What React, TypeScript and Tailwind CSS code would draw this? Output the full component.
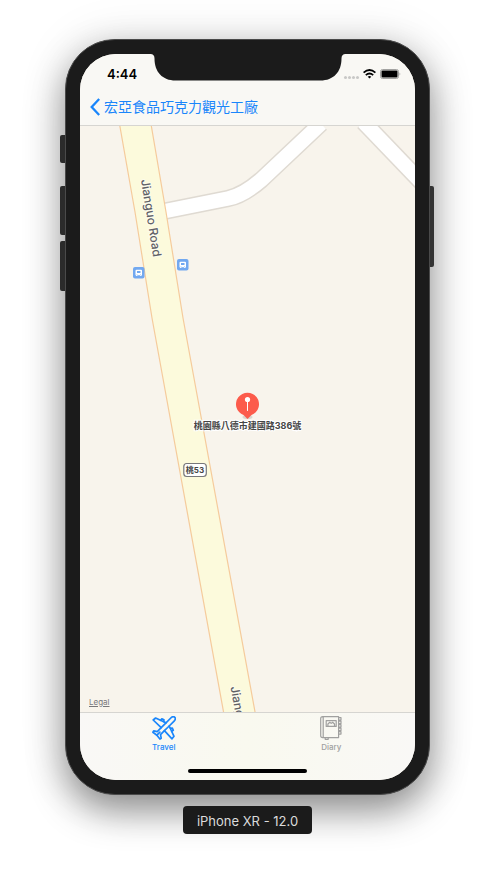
import React from "react";

const latinCjk = "font-[Inter,'Noto_Sans_CJK_TC',sans-serif]";

function BusStop({ x, y }: { x: number; y: number }) {
  return (
    <g transform={`translate(${x} ${y})`}>
      <rect width="11.5" height="11.5" rx="2" fill="#72a8f0" />
      <path
        fillRule="evenodd"
        fill="#fff"
        d="M3.500 2.800h4.500q1 0 1 1v4.400h-.6v.9H7.200v-.9H4.300v.9H3.100v-.9h-.6V3.800q0-1 1-1ZM4 4v2h3.500V4ZM3.600 7v.6h.8V7ZM7.100 7v.6h.8V7Z"
      />
    </g>
  );
}

function MapDrawing() {
  return (
    <svg
      viewBox="80 126 335 586"
      preserveAspectRatio="xMidYMin slice"
      className={`block size-full ${latinCjk}`}
      role="img"
      aria-label="Map"
    >
      <g fill="none">
        <path d="M158 212.500 L228 198.500 Q243 195.500 261 180 L321 123.500" stroke="#dfdad2" strokeWidth="17.500" />
        <path d="M363.500 122 L425 186" stroke="#dfdad2" strokeWidth="17.500" />
        <path d="M158 212.500 L228 198.500 Q243 195.500 261 180 L321 123.500" stroke="#fff" strokeWidth="14.500" />
        <path d="M363.500 122 L425 186" stroke="#fff" strokeWidth="14.500" />
      </g>
      <path
        d="M119.500 124 L135 212 L152 318 L225 720 L256.500 720 L183 318 L166 212 L151 124 Z"
        fill="#fcfadc"
        stroke="#f5cb9c"
        strokeWidth="1.200"
      />
      <g fill="#606066" stroke="#fdfcec" strokeWidth="2" paintOrder="stroke" fontSize="12" fontWeight="500">
        <text transform="translate(141 180) rotate(81)">Jianguo Road</text>
        <text transform="translate(230.500 687) rotate(80)">Jiang</text>
      </g>
      <BusStop x={133} y={267} />
      <BusStop x={177} y={259} />
      <ellipse cx="247.500" cy="417" rx="5" ry="2" fill="#000" opacity=".12" />
      <path
        d="M247.500 419 L243.500 415 A11.500 11.500 0 1 1 251.500 415 Z"
        fill="#fc5b4b"
      />
      <path d="M247.500 400V410.500" stroke="#fff" strokeWidth="1" strokeLinecap="round" />
      <circle cx="247.500" cy="399.500" r="2.600" fill="#fff" />
      <text
        x="247.500"
        y="429"
        textAnchor="middle"
        fontSize="9"
        fontWeight="700"
        fill="#454545"
        stroke="#fff"
        strokeWidth="2"
        paintOrder="stroke"
      >
        桃園縣八德市建國路386號
      </text>
      <rect x="183.800" y="463.500" width="22.500" height="13" rx="3" fill="#fff" stroke="#77777a" strokeWidth="1.200" />
      <text x="195" y="473" textAnchor="middle" fontSize="8" fontWeight="700" fill="#444">
        桃53
      </text>
    </svg>
  );
}

function PlaneIcon() {
  return (
    <svg
      viewBox="0 0 24 24"
      className="size-6"
      fill="none"
      stroke="currentColor"
      strokeWidth="1.700"
      strokeLinejoin="round"
      strokeLinecap="round"
      aria-hidden="true"
    >
      <path d="M22.800 1.300C21.700.3 20 .8 18.800 2L14 6.800 3.600 2 1.200 4l8 7.600-3.900 4L1.700 14.800.9 16.200l4 3 3 3.900 1.300-.9-.7-3.600 3.900-4 7.600 8.200 2-2.500L17.200 10l4.900-4.900C23.300 4 23.800 2.300 22.800 1.300Z" />
      <path d="M14 6.800 9.200 11.600M17.200 10 12.400 14.600M4.900 19.200l3-3" />
      <path d="M8.600 4.300 9.800 2.800 12 3.800 11.600 5.600M18.400 12.400 20.300 12 21.300 14.300 19.700 15.400" />
    </svg>
  );
}

function DiaryIcon() {
  return (
    <svg
      viewBox="0 0 24 24"
      className="size-6"
      fill="none"
      stroke="currentColor"
      strokeWidth="1.200"
      strokeLinejoin="round"
      aria-hidden="true"
    >
      <path d="M3.600.7H19.600V21.600H3.600Q1.700 21.600 1.700 19.700V2.600Q1.700.7 3.600.7ZM4.200.7V21.600" />
      <path d="M7.200 4.600H17.200V10.400H7.200ZM8.900 10.200V8L10.800 6.300 12.200 7.400 13.600 6.300 15.500 8V10.200" />
      <path d="M19.600 1.700h2.400v2.400h-2.400M19.600 5.200h2.400v2.400h-2.400M19.600 8.700h2.400v2.400h-2.400M19.600 12.200h2.400v2.400h-2.400M19.600 15.700h2.400v2.400h-2.400" />
      <path d="M6.200 21.600v1.700h3v-1.700" />
    </svg>
  );
}

function StatusBar() {
  return (
    <div className="flex h-[42px] items-center justify-between pr-[14px] pl-[27px]">
      <time className="text-[13px] font-semibold text-black">4:44</time>
      <div className="flex items-center gap-1 pb-[2px]">
        <span className="mt-[6px] flex gap-px" aria-hidden="true">
          <i className="size-[3px] rounded-full bg-[#c8c8c6]" />
          <i className="size-[3px] rounded-full bg-[#c8c8c6]" />
          <i className="size-[3px] rounded-full bg-[#c8c8c6]" />
          <i className="size-[3px] rounded-full bg-[#c8c8c6]" />
        </span>
        <svg viewBox="0 0 13 10" className="h-[10px] w-[13px]" fill="none" stroke="#000" strokeWidth="1.700" aria-label="Wi-Fi">
          <path d="M.6 3.700Q6.500-1.700 12.400 3.700M2.800 6.200Q6.500 2.800 10.200 6.200" />
          <path d="M6.500 9.600 4.700 7.700Q6.500 6.300 8.300 7.700Z" fill="#000" stroke="none" />
        </svg>
        <svg viewBox="0 0 21 10" className="h-[10px] w-[21px]" aria-label="Battery">
          <rect x=".5" y=".5" width="18" height="9" rx="2" fill="none" stroke="#a3a3a1" />
          <rect x="1.500" y="1.500" width="16" height="7" rx="1" fill="#000" />
          <path d="M19.600 3.300Q21 5 19.600 6.700Z" fill="#8c8c8a" />
        </svg>
      </div>
    </div>
  );
}

function Notch() {
  return (
    <svg viewBox="0 0 195 27" className="absolute top-0 left-1/2 h-[27px] w-[195px] -translate-x-1/2" aria-hidden="true">
      <path d="M0 0Q4 0 4 4.500C4 18 12 26.500 25 26.500H170C183 26.500 191 18 191 4.500Q191 0 195 0Z" fill="#1b1b1b" />
    </svg>
  );
}

export default function App() {
  return (
    <main className={`flex min-h-screen flex-col items-center bg-white px-[65px] pt-[39px] pb-9 ${latinCjk}`}>
      <div className="relative w-full max-w-[414px] rounded-[50px] border border-[#4a4a4a] bg-[#1b1b1b] p-[14px] shadow-[0_16px_36px_rgba(0,0,0,0.42),0_0_50px_rgba(0,0,0,0.1)]">
        <span className="absolute top-[95px] -left-[6px] h-7 w-[5px] rounded-l-[2px] bg-[#2b2b2b]" />
        <span className="absolute top-[146px] -left-[6px] h-[49px] w-[5px] rounded-l-[2px] bg-[#2b2b2b]" />
        <span className="absolute top-[201px] -left-[6px] h-[50px] w-[5px] rounded-l-[2px] bg-[#2b2b2b]" />
        <span className="absolute top-[146px] -right-[5px] h-[81px] w-[4px] rounded-r-[2px] bg-[#333]" />

        <div className="relative overflow-hidden rounded-[36px] bg-[#f8f4ec]">
          <header className="border-b border-[#d6d5d1] bg-[#f9f8f4]">
            <StatusBar />
            <nav className="flex h-[29px] items-center px-[10px] pb-2">
              <button type="button" className="flex items-center gap-1 text-[14px] leading-5 text-[#1a86fb]">
                <svg viewBox="0 0 10 18" className="h-[18px] w-[10px]" fill="none" stroke="currentColor" strokeWidth="2.300" aria-hidden="true">
                  <path d="M9.200 1 1.700 9l7.500 8" />
                </svg>
                宏亞食品巧克力觀光工廠
              </button>
            </nav>
          </header>

          <section className="relative h-[586px]">
            <MapDrawing />
            <a href="#legal" className="absolute bottom-[5px] left-[9px] text-[8px] leading-[10px] text-[#77777a] underline">
              Legal
            </a>
          </section>

          <footer className="border-t border-[#d6d5d1] bg-linear-to-r from-[#f9f8f6] via-[#f9f9ef] to-[#f9f8f6]">
            <div className="grid h-[56px] grid-cols-2">
              <button type="button" className="flex flex-col items-center pt-[3px] text-[8px] leading-[14px] font-medium text-[#1a86fb]">
                <PlaneIcon />
                Travel
              </button>
              <button type="button" className="flex flex-col items-center pt-[3px] text-[8px] leading-[14px] font-medium text-[#a0a09f]">
                <DiaryIcon />
                Diary
              </button>
            </div>
            <div className="flex h-[11px] justify-center">
              <span className="h-1 w-[119px] rounded-full bg-black" />
            </div>
          </footer>
          <Notch />
        </div>
      </div>

      <p className="relative mt-[11px] flex h-7 w-[129px] items-center justify-center rounded-[4px] bg-[#1b1b1b] pt-[3px] text-[13px] text-[#dcdcdc]">
        iPhone XR - 12.0
      </p>
    </main>
  );
}
